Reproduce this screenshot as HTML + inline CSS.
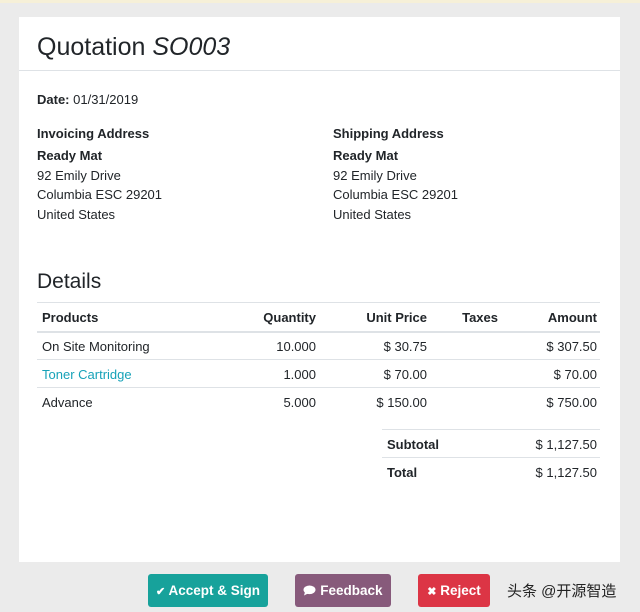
<!DOCTYPE html>
<html><head><style>
body{margin:0;width:640px;height:612px;background:#ebebeb;font-family:"Liberation Sans",sans-serif;color:#212529;position:relative;overflow:hidden}
.top{position:absolute;left:0;top:0;width:640px;height:3px;background:#f6f0d8}
.card{position:absolute;left:19px;top:17px;width:601px;height:545px;background:#fff}
.t{position:absolute;white-space:nowrap;font-size:13px}
b{font-weight:bold}
.hl{position:absolute;height:1px;background:#dee2e6}
.btn{position:absolute;top:574px;height:33px;border-radius:3px;color:#fff;font-size:13.5px;font-weight:bold;line-height:33px;text-align:center}
.btn span{font-size:11px}
</style></head><body>
<div class="top"></div>
<div class="card"></div>
<div class="t" style="left:37px;top:33px;font-size:25px">Quotation <i>SO003</i></div>
<div class="hl" style="left:19px;width:601px;top:70px"></div>
<div class="t" style="left:37px;top:92px"><b>Date:</b> 01/31/2019</div>
<div class="t" style="left:37px;top:124px;line-height:19.4px"><b>Invoicing Address</b><br><span style="display:block;height:3px"></span><b>Ready Mat</b><br>92 Emily Drive<br>Columbia ESC 29201<br>United States</div>
<div class="t" style="left:333px;top:124px;line-height:19.4px"><b>Shipping Address</b><br><span style="display:block;height:3px"></span><b>Ready Mat</b><br>92 Emily Drive<br>Columbia ESC 29201<br>United States</div>
<div class="t" style="left:37px;top:270px;font-size:21px">Details</div>
<div class="hl" style="left:37px;width:563px;top:302px"></div>
<div class="hl" style="left:37px;width:563px;top:331px;height:2px"></div>
<div class="hl" style="left:37px;width:563px;top:359px"></div>
<div class="hl" style="left:37px;width:563px;top:387px"></div>
<div class="t" style="left:42px;top:310px"><b>Products</b></div>
<div class="t" style="right:324px;top:310px"><b>Quantity</b></div>
<div class="t" style="right:213px;top:310px"><b>Unit Price</b></div>
<div class="t" style="right:142px;top:310px"><b>Taxes</b></div>
<div class="t" style="right:43px;top:310px"><b>Amount</b></div>
<div class="t" style="left:42px;top:339px">On Site Monitoring</div>
<div class="t" style="right:324px;top:339px">10.000</div>
<div class="t" style="right:213px;top:339px">$ 30.75</div>
<div class="t" style="right:43px;top:339px">$ 307.50</div>
<div class="t" style="left:42px;top:367px;color:#17a2b8">Toner Cartridge</div>
<div class="t" style="right:324px;top:367px">1.000</div>
<div class="t" style="right:213px;top:367px">$ 70.00</div>
<div class="t" style="right:43px;top:367px">$ 70.00</div>
<div class="t" style="left:42px;top:395px">Advance</div>
<div class="t" style="right:324px;top:395px">5.000</div>
<div class="t" style="right:213px;top:395px">$ 150.00</div>
<div class="t" style="right:43px;top:395px">$ 750.00</div>
<div class="hl" style="left:382px;width:218px;top:429px"></div>
<div class="hl" style="left:382px;width:218px;top:457px"></div>
<div class="t" style="left:387px;top:437px"><b>Subtotal</b></div>
<div class="t" style="right:43px;top:437px">$ 1,127.50</div>
<div class="t" style="left:387px;top:465px"><b>Total</b></div>
<div class="t" style="right:43px;top:465px">$ 1,127.50</div>
<div class="btn" style="left:148px;width:120px;background:#17a29b"><span>✔</span> Accept &amp; Sign</div>
<div class="btn" style="left:295px;width:96px;background:#875a7b"><svg width="13" height="11" viewBox="0 0 13 11" style="vertical-align:-1px"><ellipse cx="6.5" cy="4.8" rx="6" ry="4.3" fill="#fff"/><path d="M2 7 L1 10.5 L5 8.5Z" fill="#fff"/></svg> Feedback</div>
<div class="btn" style="left:418px;width:72px;background:#dc3545"><span>✖</span> Reject</div>
<div class="t" style="left:507px;top:580px;font-size:15px;color:#222;font-family:'Liberation Sans','Noto Sans CJK SC',sans-serif">头条 @开源智造</div>
</body></html>
